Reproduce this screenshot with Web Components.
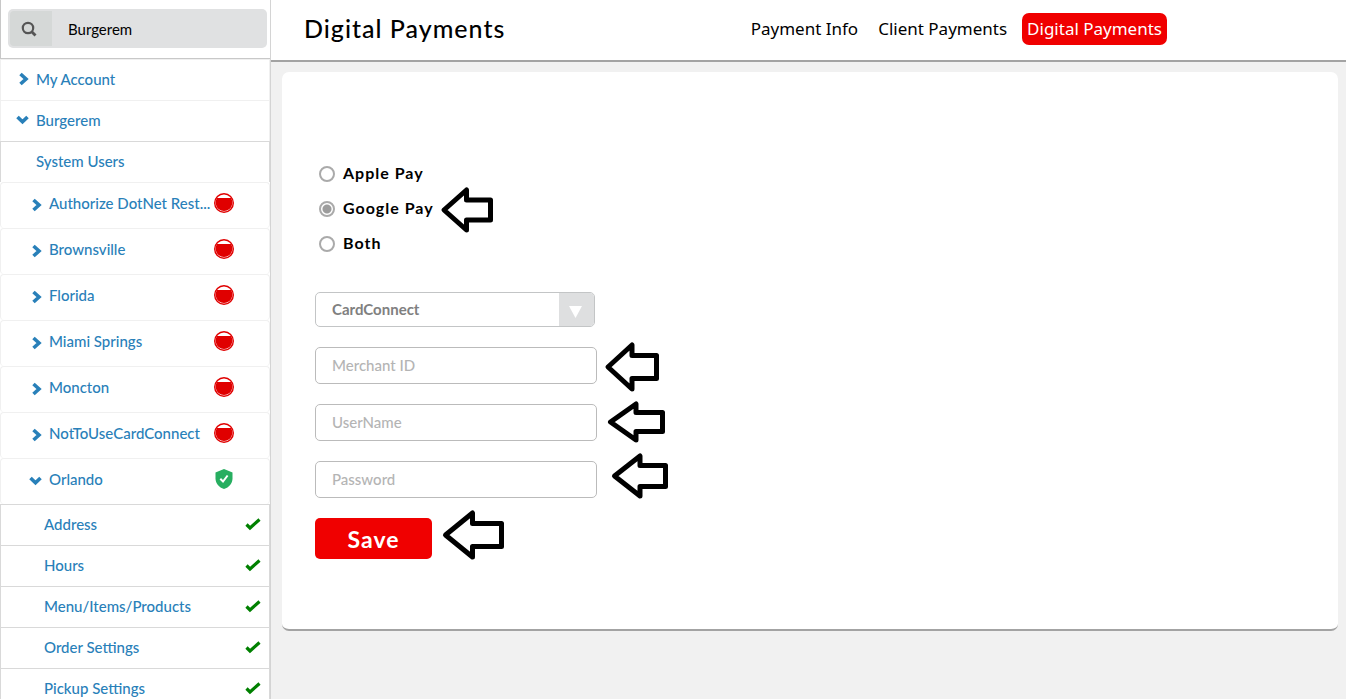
<!DOCTYPE html>
<html lang="en">
<head>
<meta charset="utf-8">
<title>Digital Payments</title>
<style>
  html, body { margin: 0; height: 100%; }
  body { background: #f1f1f1; font-family: Lato, "Open Sans", sans-serif; font-size: 15px; color: #000; }
</style>
</head>
<body>
<pay-app>
  <side-bar slot="side" query="Burgerem">
    <nav-row icon="right">My Account</nav-row>
    <nav-row icon="down">Burgerem</nav-row>
    <nav-row level="users" line="dark">System Users</nav-row>
    <nav-row level="shop" icon="right" status="off">Authorize DotNet Rest...</nav-row>
    <nav-row level="shop" icon="right" status="off">Brownsville</nav-row>
    <nav-row level="shop" icon="right" status="off">Florida</nav-row>
    <nav-row level="shop" icon="right" status="off">Miami Springs</nav-row>
    <nav-row level="shop" icon="right" status="off">Moncton</nav-row>
    <nav-row level="shop" icon="right" status="off">NotToUseCardConnect</nav-row>
    <nav-row level="shop" icon="down" status="on">Orlando</nav-row>
    <nav-row level="page" line="dark" status="done">Address</nav-row>
    <nav-row level="page" line="dark" status="done">Hours</nav-row>
    <nav-row level="page" line="dark" status="done">Menu/Items/Products</nav-row>
    <nav-row level="page" line="dark" status="done">Order Settings</nav-row>
    <nav-row level="page" line="dark" status="done">Pickup Settings</nav-row>
  </side-bar>
  <page-header slot="head">
    <span slot="title">Digital Payments</span>
    <tab-link>Payment Info</tab-link>
    <tab-link>Client Payments</tab-link>
    <tab-link active>Digital Payments</tab-link>
  </page-header>
  <payment-card></payment-card>
</pay-app>

<script>
const define = (name, html, setup) => customElements.define(name, class extends HTMLElement {
  constructor() {
    super();
    this.attachShadow({ mode: 'open' }).innerHTML = html;
  }
  connectedCallback() { if (setup) setup(this, this.shadowRoot); }
});

define('pay-app', `
  <style>
    :host { display: grid; grid-template-columns: 271px minmax(0, 1fr); height: 100vh; overflow: hidden; }
    main { display: flex; flex-direction: column; min-width: 0; }
    .body { padding: 10px 8px 10px 11px; }
  </style>
  <slot name="side"></slot>
  <main><slot name="head"></slot><div class="body"><slot></slot></div></main>`);

define('side-bar', `
  <style>
    :host { display: block; box-sizing: border-box; overflow: hidden; background: #fff; border-right: 1px solid #d4d4d4; }
    form { display: flex; align-items: center; box-sizing: border-box; height: 59px; margin: 0; padding: 0 3px 1px 7px; border: solid #c8c8c8; border-width: 0 0 1px 1px; }
    .box { display: flex; flex: 1; min-width: 0; box-sizing: border-box; height: 39px; padding: 2px; border-radius: 5px; background: #e0e1e2; }
    button { display: grid; place-items: center; flex: none; box-sizing: border-box; width: 42px; padding: 0 4px 0 0; border: 0; border-radius: 4px 0 0 4px; background: #d5d8d7; }
    input { flex: 1; min-width: 0; padding: 0 16px; border: 0; background: none; font: inherit; color: #000; }
  </style>
  <form>
    <div class="box">
      <button type="button" aria-label="Search">
        <svg width="16" height="16" viewBox="0 0 16 16" fill="none" stroke="#555" stroke-width="2.2">
          <circle cx="7" cy="7" r="5.2"/><path d="M10.500 10.500 14.500 14.500" stroke-width="2.8"/>
        </svg>
      </button>
      <input type="text" aria-label="Search locations">
    </div>
  </form>
  <nav aria-label="Locations"><slot></slot></nav>`,
  (host, root) => { root.querySelector('input').value = host.getAttribute('query'); });

const icons = {
  right: '<svg width="12" height="14" viewBox="0 0 12 14" fill="none" stroke="#2980b9" stroke-width="3.6"><path d="M3.500 2 9 7 3.500 12"/></svg>',
  down: '<svg width="14" height="12" viewBox="0 0 14 12" fill="none" stroke="#2980b9" stroke-width="3.6"><path d="M1.500 3 6.500 7.800 11.500 3"/></svg>',
  off: '<svg width="20" height="20" viewBox="0 0 20 20"><circle cx="10" cy="10" r="9.3" fill="#fff" stroke="#e00000" stroke-width="1.4"/><path d="M3 5H17A8.400 8.400 0 1 1 3 5Z" fill="#e00000"/></svg>',
  on: '<svg width="20" height="20" viewBox="0 0 20 20"><path d="M10 0 18.500 3.500V9.500C18.500 14.500 15 18.500 10 20 5 18.500 1.500 14.500 1.500 9.500V3.500Z" fill="#27ae60"/><path d="m6.300 9.800 2.700 2.700 4.600-6" fill="none" stroke="#fff" stroke-width="2"/></svg>',
  done: '<svg width="16" height="14" viewBox="0 0 16 14"><path d="M1.500 7.500 5 11 14.500 2.500" fill="none" stroke="#008000" stroke-width="3.2"/></svg>'
};
define('nav-row', `
  <style>
    :host { display: block; box-sizing: border-box; height: 41px; border: solid #f0f0f0; border-width: 1px 1px 0 1px; }
    :host([line="dark"]) { border-color: #d9d9d9; }
    :host([level="shop"]) { height: 46px; border-radius: 4px; }
    a { display: flex; align-items: center; height: 100%; box-sizing: border-box; padding: 0 35px 2px 14px; color: #2980b9; text-decoration: none; font-weight: 500; }
    .lead { display: flex; justify-content: center; width: 16px; margin-right: 5px; }
    :host([level="shop"]) a { padding-left: 27px; padding-bottom: 6px; }
    :host([level="shop"]) .lead { padding-top: 4px; }
    :host([level="page"]) a { padding-left: 43px; padding-right: 8px; }
    :host([level="page"]) .lead { display: none; }
    .text { flex: 1; white-space: nowrap; }
    .mark { display: flex; }
  </style>
  <a href="#"><span class="lead"></span><span class="text"><slot></slot></span><span class="mark"></span></a>`,
  (host, root) => {
    root.querySelector('.lead').innerHTML = icons[host.getAttribute('icon')] || '';
    root.querySelector('.mark').innerHTML = icons[host.getAttribute('status')] || '';
  });

define('page-header', `
  <style>
    :host { display: flex; align-items: center; box-sizing: border-box; height: 62px; padding: 0 179px 2px 33px; background: #fff; border-bottom: 2px solid #a3a3a3; }
    h1 { flex: 1; margin: 0; padding-bottom: 2px; font-size: 25px; line-height: 32px; font-weight: 500; letter-spacing: 1px; white-space: nowrap; }
    nav { display: flex; gap: 10px; }
  </style>
  <h1><slot name="title"></slot></h1>
  <nav aria-label="Payments"><slot></slot></nav>`);

define('tab-link', `
  <style>
    :host { display: block; }
    a { display: block; padding: 0 5px; border-radius: 7px; font: 17px/32px "Noto Sans", sans-serif; color: #000; text-decoration: none; white-space: nowrap; }
    :host([active]) a { background: #f00000; color: #fff; }
  </style>
  <a href="#"><slot></slot></a>`);

define('pay-option', `
  <style>
    :host { display: block; }
    label { display: flex; align-items: center; gap: 8px; height: 35px; font-size: 16px; font-weight: 700; letter-spacing: 1px; }
    span { padding-bottom: 3px; }
    input { appearance: none; box-sizing: border-box; width: 16px; height: 16px; margin: 0; border: 2px solid #aaa; border-radius: 50%; background: #fff; }
    input:checked { background: radial-gradient(circle, #9c9c9c 4px, #fff 5px); }
  </style>
  <label><input type="radio"><span><slot></slot></span></label>`,
  (host, root) => { root.querySelector('input').checked = host.hasAttribute('checked'); });

define('pay-field', `
  <style>
    :host { display: block; }
    input { display: block; box-sizing: border-box; width: 282px; height: 37px; padding: 0 16px 2px; border: 1px solid #bbb; border-radius: 5px; background: #fff; font: 500 15px Lato, sans-serif; color: #777; }
    input::placeholder { color: #b4b4b4; opacity: 1; }
  </style>
  <input>`,
  (host, root) => {
    const input = root.querySelector('input');
    input.type = host.getAttribute('type') || 'text';
    input.placeholder = host.getAttribute('label');
    input.setAttribute('aria-label', host.getAttribute('label'));
  });

define('pay-select', `
  <style>
    :host { display: grid; width: 280px; height: 35px; }
    select, span { grid-area: 1 / 1; box-sizing: border-box; }
    select { appearance: none; width: 100%; height: 100%; padding: 0 52px 2px 16px; border: 1px solid #c3c5c6; border-radius: 5px; background: #fff; font: 700 15px Lato, sans-serif; color: #808080; }
    span { display: grid; place-items: center; justify-self: end; width: 35px; margin: 1px; padding: 5px 2px 0 0; border-radius: 0 4px 4px 0; background: #dedfe0; pointer-events: none; }
  </style>
  <select aria-label="Gateway"><option>CardConnect</option></select>
  <span><svg width="13" height="12" viewBox="0 0 13 12"><path d="M0 0H13L6.500 12Z" fill="#fff"/></svg></span>`);

define('hint-arrows', `
  <style>
    :host { position: absolute; inset: 0 auto auto 0; pointer-events: none; }
    svg { display: block; }
  </style>
  <svg width="400" height="500" viewBox="282 72 400 500" fill="none" stroke="#000" stroke-width="5" stroke-linejoin="round" aria-hidden="true">
    <path d="M444 210 466.500 190V200H490.500V220H466.500V230Z"/>
    <path d="M608 367 632 345V355.500H656.500V378.500H632V389Z"/>
    <path d="M610.500 422 636 404V412.500H662.500V431.500H636V440Z"/>
    <path d="M614.500 476 640 456V465.500H665.500V486.500H640V496Z"/>
    <path d="M445.500 535 472.500 513V523.500H501.500V546.500H472.500V557Z"/>
  </svg>`);

define('payment-card', `
  <style>
    :host { display: block; position: relative; padding: 84px 33px 70px; background: #fff; border-bottom: 2px solid #a3a3a3; border-radius: 7px; }
    form { display: grid; justify-items: start; gap: 20px; }
    fieldset { margin: 0 0 11px; padding: 0 0 0 4px; border: 0; }
    button { width: 117px; height: 41px; padding: 0; border: 0; border-radius: 5px; background: #f00000; color: #fff; font: 700 23px Lato, sans-serif; letter-spacing: 1px; }
  </style>
  <form>
    <fieldset aria-label="Wallet">
      <pay-option>Apple Pay</pay-option>
      <pay-option checked>Google Pay</pay-option>
      <pay-option>Both</pay-option>
    </fieldset>
    <pay-select></pay-select>
    <pay-field label="Merchant ID"></pay-field>
    <pay-field label="UserName"></pay-field>
    <pay-field label="Password" type="password"></pay-field>
    <button type="button">Save</button>
  </form>
  <hint-arrows></hint-arrows>`);
</script>
</body>
</html>
